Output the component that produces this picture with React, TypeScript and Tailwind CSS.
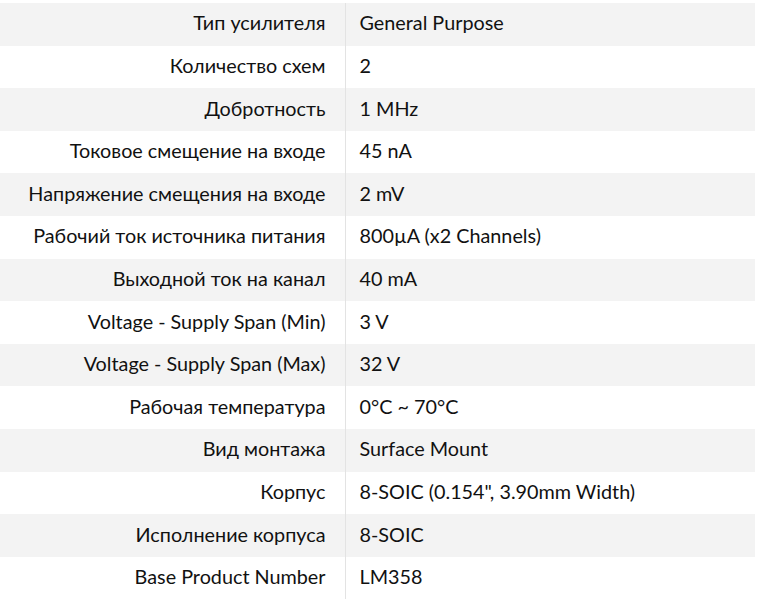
import React from 'react'

const rows: [string, string][] = [
  ['Тип усилителя', 'General Purpose'],
  ['Количество схем', '2'],
  ['Добротность', '1 MHz'],
  ['Токовое смещение на входе', '45 nA'],
  ['Напряжение смещения на входе', '2 mV'],
  ['Рабочий ток источника питания', '800µA (x2 Channels)'],
  ['Выходной ток на канал', '40 mA'],
  ['Voltage - Supply Span (Min)', '3 V'],
  ['Voltage - Supply Span (Max)', '32 V'],
  ['Рабочая температура', '0°C ~ 70°C'],
  ['Вид монтажа', 'Surface Mount'],
  ['Корпус', '8-SOIC (0.154", 3.90mm Width)'],
  ['Исполнение корпуса', '8-SOIC'],
  ['Base Product Number', 'LM358'],
]

export default function App() {
  return (
    <div className="min-h-[612px] bg-white pt-[3px] pr-[2px] font-['Lato',sans-serif] text-[19.8px] text-[#111]">
      <table className="w-full border-collapse">
        <tbody>
          {rows.map(([label, value], i) => (
            <tr key={label} className={i % 2 === 0 ? 'bg-[#f3f3f3]' : 'bg-white'}>
              <td className="h-[42.6px] w-[345px] border-r border-[#e3e3e3] pr-[19px] pb-[2px] text-right align-middle">
                {label}
              </td>
              <td className="h-[42.6px] pl-[14px] pb-[2px] align-middle">{value}</td>
            </tr>
          ))}
        </tbody>
      </table>
    </div>
  )
}
